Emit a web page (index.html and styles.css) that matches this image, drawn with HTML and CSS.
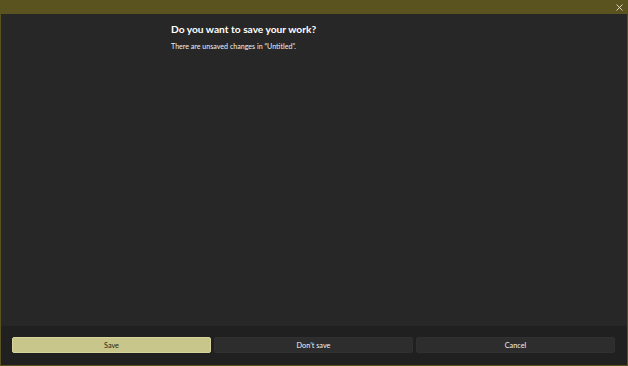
FILE: index.html
```html
<!DOCTYPE html>
<html>
<head>
<meta charset="utf-8">
<link rel="stylesheet" href="styles.css">
</head>
<body>
<div class="window">
  <div class="titlebar">
    <span class="close">
      <svg width="7" height="7" viewBox="0 0 7 7"><path d="M0.5 0.5 L6.5 6.5 M6.5 0.5 L0.5 6.5" stroke="#e8e4cc" stroke-width="0.9" fill="none"/></svg>
    </span>
  </div>
  <div class="content">
    <h1 class="title">Do you want to save your work?</h1>
    <p class="message">There are unsaved changes in “Untitled”.</p>
  </div>
  <div class="footer">
    <button class="btn primary">Save</button>
    <button class="btn">Don’t save</button>
    <button class="btn">Cancel</button>
  </div>
</div>
</body>
</html>
```
FILE: styles.css
```css
html, body {
  margin: 0;
  padding: 0;
  background: #272727;
}
.window {
  width: 628px;
  height: 366px;
  box-sizing: border-box;
  border: 1px solid #5a521f;
  border-top: none;
  display: flex;
  flex-direction: column;
  font-family: "Lato", "Noto Sans", sans-serif;
  color: #ffffff;
  background: #272727;
}
.titlebar {
  height: 14px;
  background: #5a521f;
  margin: 0 -1px;
  display: flex;
  justify-content: flex-end;
  align-items: center;
  flex-shrink: 0;
}
.close {
  width: 7px;
  height: 7px;
  margin-right: 5px;
  display: flex;
}
.content {
  flex: 1;
  padding: 9px 0 0 170px;
}
.title {
  margin: 0;
  font-size: 10.2px;
  font-weight: 700;
  line-height: 13px;
}
.message {
  margin: 6px 0 0 0;
  font-size: 7.1px;
  line-height: 10px;
  color: #f0f0f0;
}
.footer {
  height: 39px;
  box-sizing: border-box;
  background: #202020;
  padding: 11px 12px 0 11px;
  display: flex;
  gap: 3px;
  flex-shrink: 0;
}
.btn {
  flex: 1;
  height: 16px;
  border: 1px solid #303030;
  border-radius: 2px;
  background: #2d2d2d;
  color: #f2f2f2;
  font-family: "Lato", "Noto Sans", sans-serif;
  font-size: 7.3px;
  padding: 0;
  line-height: 15px;
}
.btn.primary {
  background: #c9c68b;
  border-color: #d6d39c;
  color: #1e1e10;
}
```
